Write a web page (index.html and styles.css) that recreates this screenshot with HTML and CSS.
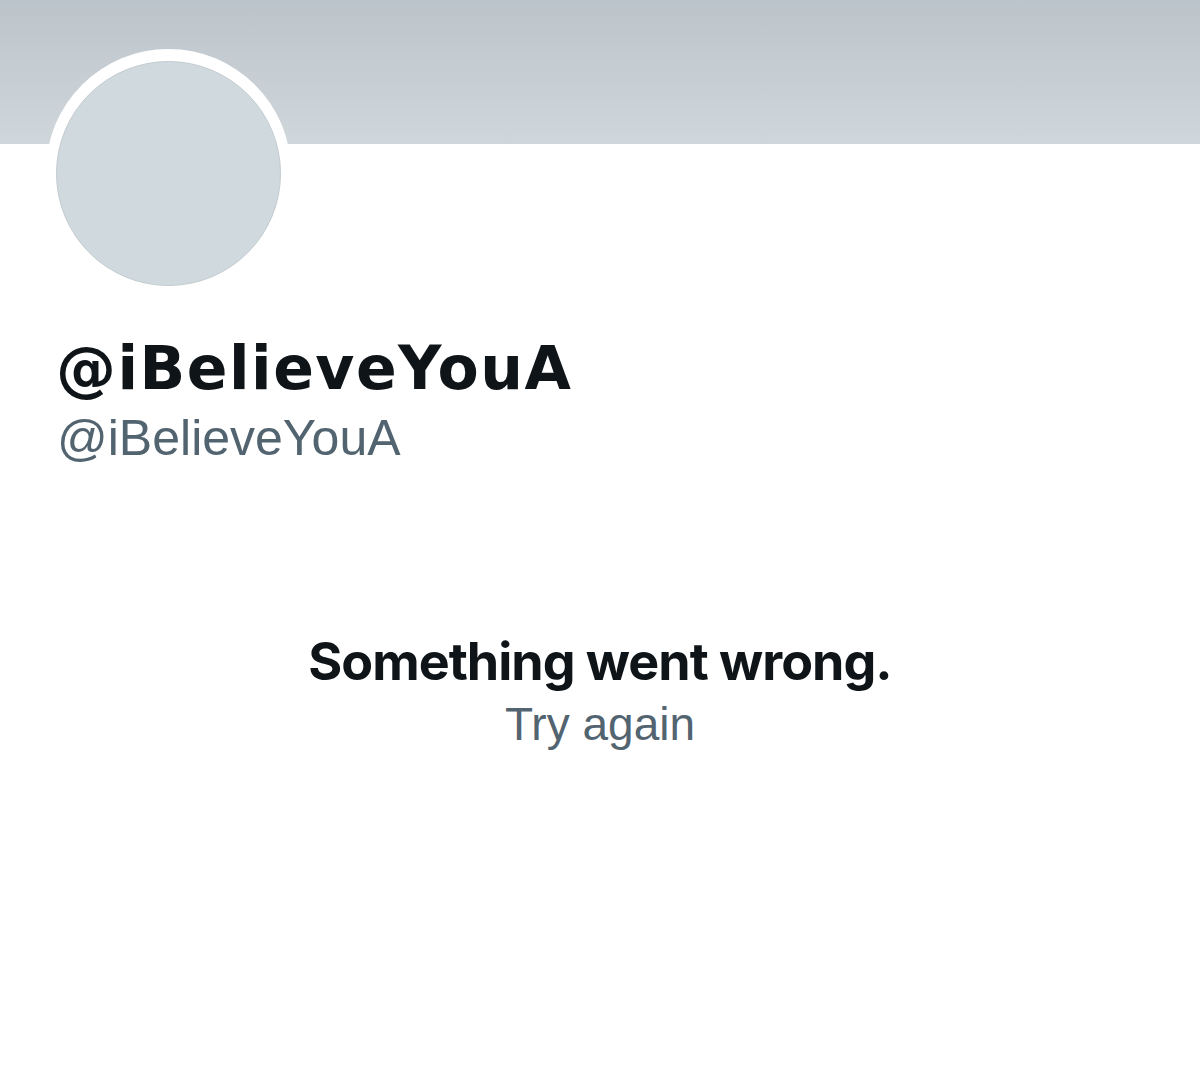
FILE: index.html
```html
<!DOCTYPE html>
<html>
<head>
<meta charset="utf-8">
<link rel="stylesheet" href="styles.css">
</head>
<body>
<div class="page">
  <div class="banner"></div>
  <div class="profile">
    <div class="avatar-ring"><div class="avatar"></div></div>
    <div class="names">
      <div class="display-name">@iBelieveYouA</div>
      <div class="handle">@iBelieveYouA</div>
    </div>
  </div>
  <div class="error">
    <div class="error-title">Something went wrong.</div>
    <div class="error-retry">Try again</div>
  </div>
</div>
</body>
</html>
```
FILE: styles.css
```css
html, body {
  margin: 0;
  padding: 0;
  background: #ffffff;
}
body {
  font-family: "Liberation Sans", Arial, sans-serif;
  width: 1200px;
  height: 1087px;
  overflow: hidden;
}
.page {
  display: flex;
  flex-direction: column;
}
.banner {
  height: 144px;
  background: linear-gradient(to bottom, #bcc4cb, #d0d7db);
}
.profile {
  padding-left: 46px;
  margin-top: -95px;
  display: flex;
  flex-direction: column;
}
.avatar-ring {
  width: 245px;
  height: 245px;
  border-radius: 50%;
  background: #ffffff;
  display: flex;
  align-items: center;
  justify-content: center;
}
.avatar {
  width: 223px;
  height: 223px;
  border-radius: 50%;
  background: #cfd9de;
  border: 1px solid #c3cbd0;
  margin-top: 4px;
}
.names {
  padding-left: 11px;
  margin-top: 38px;
}
.display-name {
  font-family: "DejaVu Sans", "Liberation Sans", sans-serif;
  font-weight: 700;
  font-size: 60px;
  line-height: 72px;
  color: #0f1419;
  letter-spacing: 1.5px;
  margin-left: -1px;
}
.handle {
  font-size: 50px;
  line-height: 68px;
  color: #536471;
}
.error {
  margin-top: 158px;
  display: flex;
  flex-direction: column;
  align-items: center;
}
.error-title {
  font-family: Inter, "Liberation Sans", sans-serif;
  font-weight: 700;
  font-size: 52px;
  line-height: 64px;
  color: #0f1419;
  letter-spacing: -1px;
}
.error-retry {
  font-size: 46px;
  line-height: 60px;
  color: #536471;
}
```
